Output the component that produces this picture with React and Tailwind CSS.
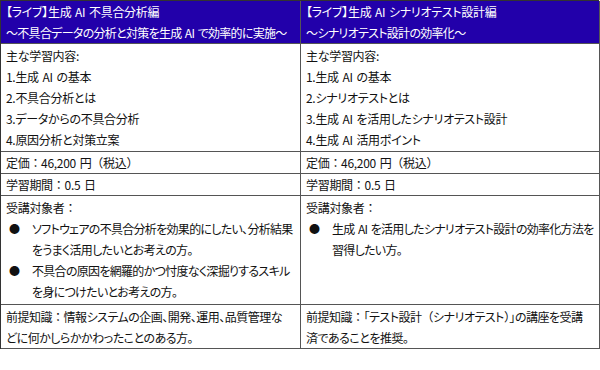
import React from "react";

const courses = [
  {
    title: "【ライブ】生成 AI 不具合分析編",
    subtitle: "～不具合データの分析と対策を生成 AI で効率的に実施～",
    contents: ["1.生成 AI の基本", "2.不具合分析とは", "3.データからの不具合分析", "4.原因分析と対策立案"],
    targets: [
      ["ソフトウェアの不具合分析を効果的にしたい、分析結果", "をうまく活用したいとお考えの方。"],
      ["不具合の原因を網羅的かつ忖度なく深掘りするスキル", "を身につけたいとお考えの方。"],
    ],
    prereq: ["前提知識：情報システムの企画、開発、運用、品質管理な", "どに何かしらかかわったことのある方。"],
  },
  {
    title: "【ライブ】生成 AI シナリオテスト設計編",
    subtitle: "～シナリオテスト設計の効率化～",
    contents: ["1.生成 AI の基本", "2.シナリオテストとは", "3.生成 AI を活用したシナリオテスト設計", "4.生成 AI 活用ポイント"],
    targets: [["生成 AI を活用したシナリオテスト設計の効率化方法を", "習得したい方。"]],
    prereq: ["前提知識：「テスト設計（シナリオテスト）」の講座を受講", "済であることを推奨。"],
  },
];

// full-width punctuation keeps its full width, kana go proportional
function Jp({ text }) {
  return text.split(/([：（）])/).map((part, i) =>
    /^[：（）]$/.test(part) ? (
      <span key={i} className="[font-feature-settings:normal]">{part}</span>
    ) : (
      part.replace(/ /g, "\u2004")
    )
  );
}

function Line({ text, className = "" }) {
  return (
    <div className={`h-[21px] leading-[21px] whitespace-nowrap ${className}`}>
      <Jp text={text} />
    </div>
  );
}

function Cell({ children, className = "" }) {
  return <div className={`border-r border-b border-[#555] pl-[5px] overflow-hidden ${className}`}>{children}</div>;
}

export default function App() {
  return (
    <div
      className="w-[600px] h-[370px] bg-white text-[12px] tracking-[-0.3px] text-[#111] [font-feature-settings:'palt']"
      style={{ fontFamily: '"Noto Sans CJK JP", "Noto Sans", sans-serif' }}
    >
      <div className="w-[599px] border-l border-t border-[#333] grid grid-cols-[300px_299px]">
        {courses.map((c) => (
          <Cell key={c.title + "h"} className="bg-[#2200aa] text-white h-[43px] border-[#222]">
            <Line text={c.title} />
            <Line text={c.subtitle} className="tracking-[-0.7px]" />
          </Cell>
        ))}
        {courses.map((c) => (
          <Cell key={c.title + "c"} className="h-[108px] pt-px">
            <Line text="主な学習内容:" />
            {c.contents.map((t) => (
              <Line key={t} text={t} />
            ))}
          </Cell>
        ))}
        {courses.map((c) => (
          <Cell key={c.title + "p"} className="h-[22px]">
            <Line text="定価：46,200 円（税込）" />
          </Cell>
        ))}
        {courses.map((c) => (
          <Cell key={c.title + "d"} className="h-[22px]">
            <Line text="学習期間：0.5 日" />
          </Cell>
        ))}
        {courses.map((c) => (
          <Cell key={c.title + "t"} className="h-[109px] pt-px">
            <Line text="受講対象者：" />
            {c.targets.map((lines) => (
              <div key={lines[0]} className="flex">
                <span className="w-[26px] shrink-0 pl-[3px] leading-[21.5px] text-[11px]">●</span>
                <div>
                  {lines.map((l) => (
                    <Line key={l} text={l} className="h-[21.5px] leading-[21.5px] tracking-[-0.7px]" />
                  ))}
                </div>
              </div>
            ))}
          </Cell>
        ))}
        {courses.map((c) => (
          <Cell key={c.title + "r"} className="h-[44px] pt-px">
            {c.prereq.map((l) => (
              <Line key={l} text={l} className="tracking-[-0.5px]" />
            ))}
          </Cell>
        ))}
      </div>
    </div>
  );
}
